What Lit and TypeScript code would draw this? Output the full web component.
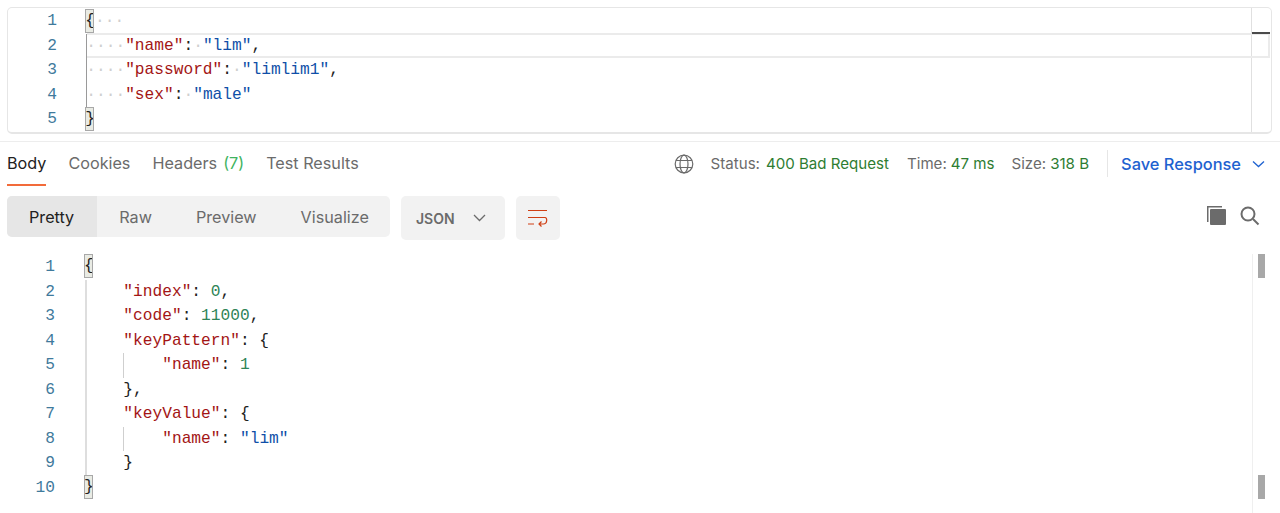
import { LitElement, html, css, TemplateResult } from "lit";
import { customElement } from "lit/decorators.js";

const k = (s: string) => html`<span class="key">${s}</span>`;
const str = (s: string) => html`<span class="str">${s}</span>`;
const num = (s: string) => html`<span class="num">${s}</span>`;
const ws = (s: string) => html`<span class="ws">${s}</span>`;
const bm = (s: string) => html`<span class="bm">${s}</span>`;

const reqLines: TemplateResult[] = [
  html`${bm("{")}${ws("···")}`,
  html`${ws("····")}${k('"name"')}:${ws("·")}${str('"lim"')},`,
  html`${ws("····")}${k('"password"')}:${ws("·")}${str('"limlim1"')},`,
  html`${ws("····")}${k('"sex"')}:${ws("·")}${str('"male"')}`,
  html`${bm("}")}`,
];

const resLines: TemplateResult[] = [
  html`${bm("{")}`,
  html`    ${k('"index"')}: ${num("0")},`,
  html`    ${k('"code"')}: ${num("11000")},`,
  html`    ${k('"keyPattern"')}: {`,
  html`    <span class="guide">    </span>${k('"name"')}: ${num("1")}`,
  html`    },`,
  html`    ${k('"keyValue"')}: {`,
  html`    <span class="guide">    </span>${k('"name"')}: ${str('"lim"')}`,
  html`    }`,
  html`${bm("}")}`,
];

@customElement("app-root")
export class AppRoot extends LitElement {
  static styles = css`
    :host {
      display: block;
      width: 1280px;
      height: 513px;
      overflow: hidden;
      background: #fff;
      font-family: Inter, "Liberation Sans", sans-serif;
      color: #6b6b6b;
    }
    .editor {
      display: flex;
      height: 127px;
      box-sizing: border-box;
      margin: 7px 8px 0 7px;
      border: 1px solid #e6e6e6;
      border-bottom-width: 2px;
      border-radius: 5px;
      overflow: hidden;
    }
    .code-block {
      flex: 1;
      min-width: 0;
      font-family: "Liberation Mono", monospace;
      font-size: 16.2px;
      color: #212121;
    }
    .editor .code-block {
      padding-top: 1px;
    }
    .line {
      display: flex;
      height: 24.55px;
      line-height: 24.55px;
    }
    .ln {
      flex: none;
      text-align: right;
      color: #3f7a9c;
      box-sizing: border-box;
    }
    .editor .ln {
      width: 49px;
    }
    .txt {
      flex: 1;
      white-space: pre;
      box-sizing: border-box;
      margin-left: 29.3px;
      position: relative;
    }
    .editor .txt {
      box-shadow: inset 1px 0 0 #9a9a9a;
    }
    .editor .line:first-child .txt,
    .editor .line:last-child .txt {
      box-shadow: none;
    }
    .line.active .txt {
      margin-right: -19px;
      z-index: 1;
    }
    .line.active .txt::before {
      content: "";
      position: absolute;
      top: -1px;
      left: 1px;
      right: 0;
      bottom: 0;
      border: 2px solid #ebebeb;
      border-left: 0;
    }
    .key {
      color: #a31515;
    }
    .str {
      color: #0f4fa8;
    }
    .num {
      color: #2f8457;
    }
    .ws {
      color: #cfcfcf;
    }
    .bm {
      background: #e9ebe4;
      outline: 1px solid #a8a8a8;
      outline-offset: -1px;
      display: inline-block;
      width: 9px;
      margin-right: 0.7px;
      margin-left: -1px;
      height: 24px;
      line-height: 24px;
      vertical-align: top;
    }
    .guide {
      box-shadow: inset 1px 0 0 #cfcfcf;
      display: inline-block;
      height: 24.55px;
      vertical-align: top;
    }
    .scroll {
      flex: none;
      width: 19px;
      border-left: 1px solid #e0e0e0;
      position: relative;
    }
    .scroll i {
      position: absolute;
      left: 0;
      right: 1px;
      top: 24px;
      height: 2px;
      background: #4a4a4a;
      z-index: 2;
    }
    .tabs {
      display: flex;
      align-items: stretch;
      height: 45px;
      margin-top: 7px;
      border-top: 1px solid #ededed;
      padding: 0 15px 0 7px;
      font-size: 16.2px;
    }
    .tab {
      margin-right: 22px;
      padding-top: 11px;
      height: 44px;
      box-sizing: border-box;
      color: #6b6b6b;
    }
    .tab.on {
      color: #212121;
      border-bottom: 2px solid #f26b3a;
    }
    .count {
      color: #3fb35f;
      margin-left: 1.5px;
    }
    .meta {
      margin-left: auto;
      display: flex;
      align-items: center;
      height: 43px;
      font-size: 15.1px;
      color: #6b6b6b;
    }
    .globe {
      width: 20px;
      height: 20px;
      margin-right: 17px;
    }
    .pair {
      display: flex;
    }
    .pair b {
      font-weight: 400;
      color: #2e7d32;
    }
    .status {
      gap: 6px;
      margin-right: 18px;
    }
    .time {
      gap: 4px;
      margin-right: 17px;
    }
    .size {
      gap: 4px;
      margin-right: 18px;
    }
    .sep {
      width: 1px;
      height: 27px;
      background: #e6e6e6;
      margin: 0 13px 0 0;
    }
    .save {
      color: #1e62d0;
      font-size: 16.4px;
      font-weight: 500;
      display: flex;
      align-items: center;
      gap: 11px;
    }
    .toolbar {
      display: flex;
      align-items: flex-start;
      height: 44px;
      margin-top: 9px;
      padding: 0 20px 0 7px;
    }
    .seg {
      display: flex;
      background: #f2f2f2;
      border-radius: 5px;
      height: 41px;
      width: 383px;
      overflow: hidden;
      font-size: 16.2px;
    }
    .seg span {
      display: flex;
      align-items: center;
      padding: 0 22px;
    }
    .seg span.on {
      background: #e6e6e6;
      color: #212121;
      padding-right: 23px;
    }
    .json {
      margin-left: 11px;
      width: 104px;
      height: 44px;
      box-sizing: border-box;
      background: #f2f2f2;
      border-radius: 5px;
      display: flex;
      align-items: center;
      padding-left: 15px;
      gap: 18px;
      font-size: 14px;
      font-weight: 600;
      color: #6b6b6b;
    }
    .wrap {
      margin-left: 11px;
      width: 44px;
      height: 44px;
      background: #f2f2f2;
      border-radius: 5px;
      display: flex;
      align-items: center;
      justify-content: center;
    }
    .tools {
      margin-left: auto;
      display: flex;
      align-items: center;
      gap: 13px;
      margin-top: 10px;
    }
    .response {
      display: flex;
      margin-top: 15px;
    }
    .response .ln {
      width: 55px;
    }
    .response .txt {
      margin-left: 29.5px;
      box-shadow: inset 2px 0 0 #dedede;
    }
    .response .bm {
      margin-top: -1px;
      margin-left: -0.5px;
    }
    .response .line:first-child .txt,
    .response .line:last-child .txt {
      box-shadow: none;
    }
    .rbar {
      flex: none;
      width: 26px;
      margin-right: 1px;
      margin-top: -1px;
      border-left: 1px solid #efefef;
      height: 259px;
      position: relative;
    }
    .rbar i {
      position: absolute;
      left: 5px;
      width: 7px;
      background: #a8a8a8;
    }
    .rbar .t1 {
      top: 0;
      height: 24px;
    }
    .rbar .t2 {
      top: 221px;
      height: 24px;
    }
  `;

  render() {
    return html`
      <div class="editor">
        <div class="code-block">
          ${reqLines.map(
            (l, i) => html`<div class="line ${i === 1 ? "active" : ""}">
              <span class="ln">${i + 1}</span><span class="txt">${l}</span>
            </div>`
          )}
        </div>
        <div class="scroll"><i></i></div>
      </div>

      <div class="tabs">
        <div class="tab on">Body</div>
        <div class="tab">Cookies</div>
        <div class="tab">Headers <span class="count">(7)</span></div>
        <div class="tab">Test Results</div>
        <div class="meta">
          <svg class="globe" viewBox="0 0 20 20" fill="none" stroke="#6b6b6b" stroke-width="1.2">
            <circle cx="10" cy="10" r="8.8"></circle>
            <ellipse cx="10" cy="10" rx="4" ry="8.8"></ellipse>
            <path d="M2 6.5h16M2 13.5h16"></path>
          </svg>
          <span class="pair status">Status: <b>400 Bad Request</b></span>
          <span class="pair time">Time: <b>47 ms</b></span>
          <span class="pair size">Size: <b>318 B</b></span>
          <span class="sep"></span>
          <span class="save">
            Save Response
            <svg width="13" height="8" viewBox="0 0 13 8" fill="none" stroke="#1e62d0" stroke-width="1.3">
              <path d="M1 1.500l5.500 5 5.500-5"></path>
            </svg>
          </span>
        </div>
      </div>

      <div class="toolbar">
        <div class="seg">
          <span class="on">Pretty</span><span>Raw</span><span>Preview</span><span>Visualize</span>
        </div>
        <div class="json">
          JSON
          <svg width="13" height="8" viewBox="0 0 13 8" fill="none" stroke="#6b6b6b" stroke-width="1.3">
            <path d="M1 1l5.500 5.500L12 1"></path>
          </svg>
        </div>
        <div class="wrap">
          <svg width="20" height="18" viewBox="0 0 20 18" fill="none" stroke="#cf3f14" stroke-width="1.2">
            <path d="M0 1.500h19M0 8.500h17c2.500 0 2.500 6.500-1.500 6.500H11M13.500 12.500L11 15l2.500 2.500M0 15h6"></path>
          </svg>
        </div>
        <div class="tools">
          <svg width="20" height="20" viewBox="0 0 20 20">
            <path d="M0 0h15v1.500H1.500V16H0z" fill="#6b6b6b"></path>
            <rect x="3" y="3" width="16" height="16" rx="1" fill="#6b6b6b"></rect>
          </svg>
          <svg width="20" height="20" viewBox="0 0 20 20" fill="none" stroke="#6b6b6b" stroke-width="2">
            <circle cx="8" cy="8" r="6.500"></circle>
            <path d="M13 13l5.500 5.500"></path>
          </svg>
        </div>
      </div>

      <div class="response">
        <div class="code-block">
          ${resLines.map(
            (l, i) => html`<div class="line">
              <span class="ln">${i + 1}</span><span class="txt">${l}</span>
            </div>`
          )}
        </div>
        <div class="rbar"><i class="t1"></i><i class="t2"></i></div>
      </div>
    `;
  }
}
